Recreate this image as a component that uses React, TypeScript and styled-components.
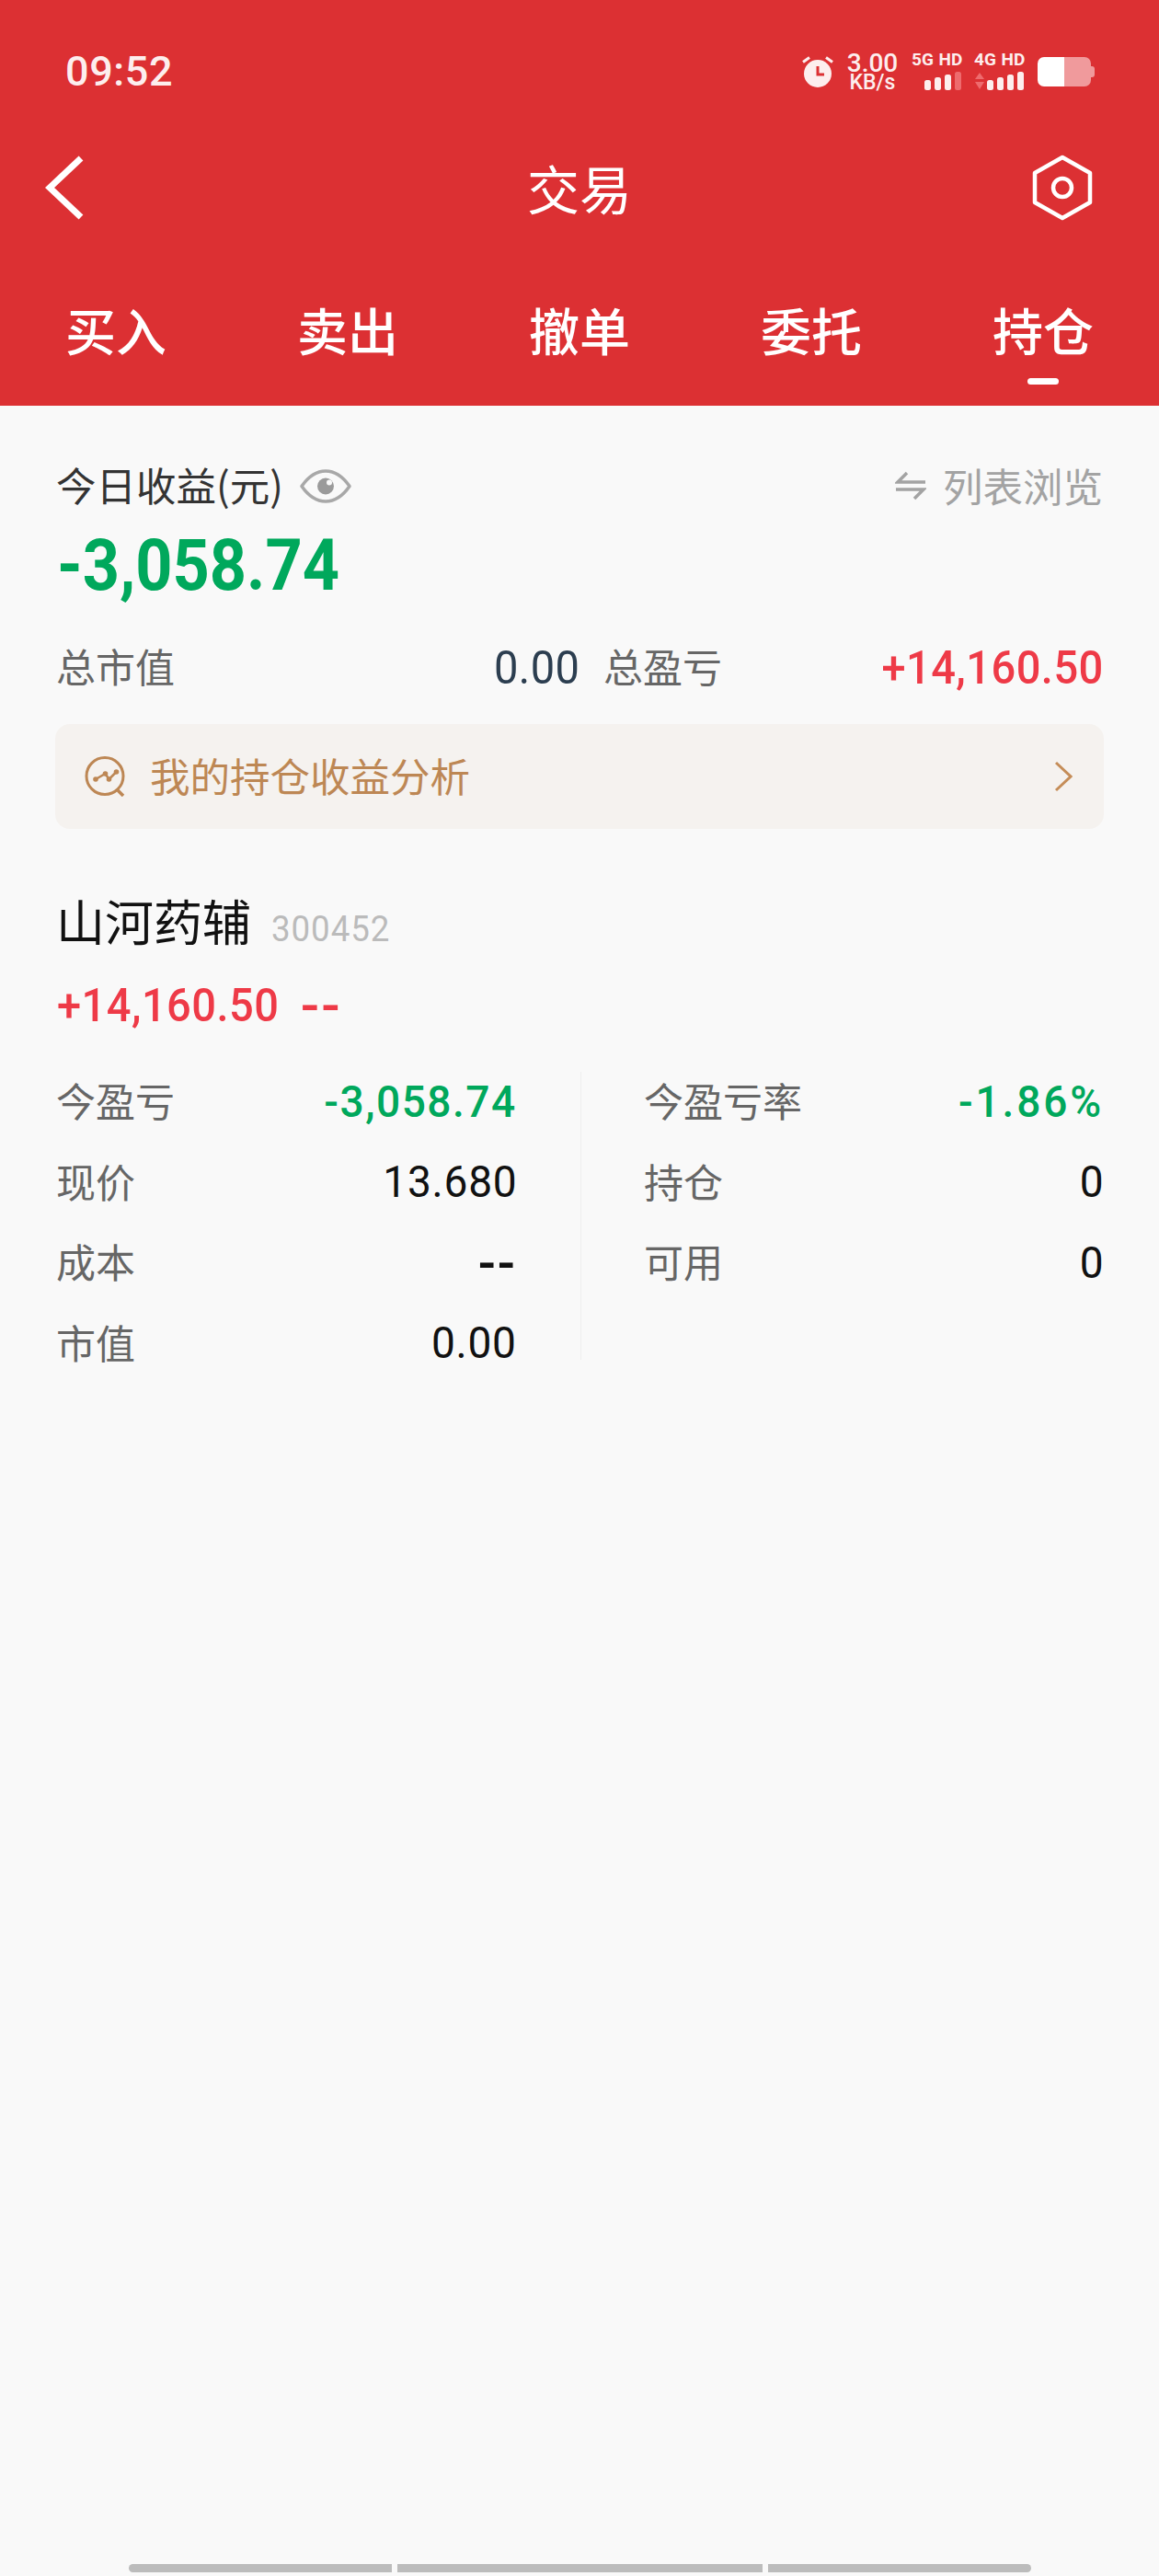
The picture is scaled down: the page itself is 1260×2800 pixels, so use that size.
import styled, { createGlobalStyle, css } from 'styled-components';

const GlobalStyle = createGlobalStyle`
    html, body {
        margin: 0;
        padding: 0;
        background: #f9f9f9;
    }
    * {
        box-sizing: border-box;
    }
`;

const CJK = `"Noto Sans CJK SC", sans-serif`;
const NUM = `Roboto, "Liberation Sans", sans-serif`;

const TABS = [
    { label: '买入' },
    { label: '卖出' },
    { label: '撤单' },
    { label: '委托' },
    { label: '持仓', active: true },
];

const LEFT_ROWS = [
    { label: '今盈亏', value: '-3,058.74', tone: 'green', spacing: '1.6px' },
    { label: '现价', value: '13.680' },
    { label: '成本', value: '--' },
    { label: '市值', value: '0.00' },
];

const RIGHT_ROWS = [
    { label: '今盈亏率', value: '-1.86%', tone: 'green', spacing: '3px' },
    { label: '持仓', value: '0' },
    { label: '可用', value: '0' },
];

const SIGNAL_BARS = [
    { x: 0, y: 9 },
    { x: 11, y: 6 },
    { x: 22, y: 3 },
    { x: 33, y: 0 },
];

const AlarmIcon = () => (
    <svg width="34" height="34" viewBox="0 0 34 34">
        <circle cx="17" cy="19" r="15" fill="#fdeeee" />
        <path d="M17 11v9h7" fill="none" stroke="#dc3033" strokeWidth="3" />
        <path d="M8 1.5 1 6.5M26 1.5l7 5" fill="none" stroke="#fdeeee" strokeWidth="3" />
    </svg>
);

const SignalIcon = ({ withArrows }: { withArrows?: boolean }) => (
    <svg width="56" height="20" viewBox="0 0 56 20">
        {withArrows && (
            <>
                <path d="M6 1 11 8H1Z" fill="#ee6b6e" />
                <path d="M6 19 11 11H1Z" fill="#ee6b6e" />
            </>
        )}
        {SIGNAL_BARS.map((bar, i) => (
            <rect
                key={bar.x}
                x={14 + bar.x}
                y={bar.y}
                width="7"
                height={20 - bar.y}
                rx="2.5"
                fill={!withArrows && i === 3 ? '#ee6b6e' : '#fdeeee'}
            />
        ))}
    </svg>
);

const BatteryIcon = () => (
    <svg width="62" height="32" viewBox="0 0 62 32">
        <path d="M29 0h22a7 7 0 0 1 7 7v18a7 7 0 0 1-7 7H29Z" fill="#f09a9c" />
        <path d="M7 0h22v32H7a7 7 0 0 1-7-7V7a7 7 0 0 1 7-7Z" fill="#fff" />
        <path d="M58 10h1a3 3 0 0 1 3 3v6a3 3 0 0 1-3 3h-1Z" fill="#f09a9c" />
    </svg>
);

const BackIcon = () => (
    <svg width="42" height="70" viewBox="0 0 42 70">
        <path d="M39 3 5 35l34 32" fill="none" stroke="#fff" strokeWidth="7" />
    </svg>
);

const HexIcon = () => (
    <svg width="66" height="72" viewBox="0 0 66 72">
        <path
            d="M33 3 63 20v32L33 69 3 52V20Z"
            fill="none"
            stroke="#fff"
            strokeWidth="4.5"
            strokeLinejoin="round"
        />
        <circle cx="33" cy="36" r="10" fill="none" stroke="#fff" strokeWidth="4.5" />
    </svg>
);

const EyeIcon = () => (
    <svg width="56" height="37" viewBox="0 0 56 37">
        <path
            d="M2 18.5C10 7 18 2 28 2s18 5 26 16.5C46 30 38 35 28 35S10 30 2 18.5Z"
            fill="none"
            stroke="#a8a8a8"
            strokeWidth="3.5"
            strokeLinejoin="round"
        />
        <circle cx="28" cy="18.5" r="9" fill="#9a9a9a" />
        <circle cx="32" cy="14.5" r="3" fill="#f9f9f9" />
    </svg>
);

const SwapIcon = () => (
    <svg width="34" height="32" viewBox="0 0 34 32">
        <path d="M33 12H3L13 2" fill="none" stroke="#a3a3a3" strokeWidth="3.5" />
        <path d="M1 20h30L21 30" fill="none" stroke="#a3a3a3" strokeWidth="3.5" />
    </svg>
);

const AnalysisIcon = () => (
    <svg width="46" height="44" viewBox="0 0 46 44">
        <circle cx="22" cy="21.5" r="20" fill="none" stroke="#bd8754" strokeWidth="3" />
        <path d="M35 36l7 7" fill="none" stroke="#bd8754" strokeWidth="3.5" />
        <path d="M12 25l10.500-6 4 6 8-8" fill="none" stroke="#bd8754" strokeWidth="2.500" />
        <circle cx="12" cy="25" r="2.800" fill="#bd8754" />
        <circle cx="22.500" cy="19" r="2.800" fill="#bd8754" />
        <circle cx="26.500" cy="25" r="2.800" fill="#bd8754" />
        <circle cx="34.500" cy="17" r="2.800" fill="#bd8754" />
    </svg>
);

const ChevronIcon = () => (
    <svg width="20" height="34" viewBox="0 0 20 34">
        <path d="M2 2l16 15L2 32" fill="none" stroke="#c58d58" strokeWidth="3" />
    </svg>
);

const App = () => {
    return (
        <SPage>
            <GlobalStyle />
            <Header>
                <StatusBar>
                    <Time>09:52</Time>
                    <StatusIcons>
                        <AlarmIcon />
                        <Speed>
                            <SpeedValue>3.00</SpeedValue>
                            <SpeedUnit>KB/s</SpeedUnit>
                        </Speed>
                        <Network>
                            <NetworkLabel>5G HD</NetworkLabel>
                            <SignalIcon />
                        </Network>
                        <Network>
                            <NetworkLabel>4G HD</NetworkLabel>
                            <SignalIcon withArrows />
                        </Network>
                        <BatteryIcon />
                    </StatusIcons>
                </StatusBar>
                <NavBar>
                    <NavBack>
                        <BackIcon />
                    </NavBack>
                    <NavTitle>交易</NavTitle>
                    <NavAction>
                        <HexIcon />
                    </NavAction>
                </NavBar>
                <Tabs>
                    {TABS.map((tab) => (
                        <Tab key={tab.label}>
                            <TabLabel>{tab.label}</TabLabel>
                            {tab.active && <TabIndicator />}
                        </Tab>
                    ))}
                </Tabs>
            </Header>

            <Content>
                <SummaryTop>
                    <TitleGroup>
                        <SummaryTitle>今日收益(元)</SummaryTitle>
                        <EyeIcon />
                    </TitleGroup>
                    <ListToggle>
                        <SwapIcon />
                        <span>列表浏览</span>
                    </ListToggle>
                </SummaryTop>
                <TodayProfit>-3,058.74</TodayProfit>
                <SummaryRow>
                    <SummaryCell>
                        <SummaryLabel>总市值</SummaryLabel>
                        <SummaryValue>0.00</SummaryValue>
                    </SummaryCell>
                    <SummaryCell>
                        <SummaryLabel>总盈亏</SummaryLabel>
                        <SummaryValue $tone="red">+14,160.50</SummaryValue>
                    </SummaryCell>
                </SummaryRow>
                <Banner>
                    <AnalysisIcon />
                    <BannerText>我的持仓收益分析</BannerText>
                    <ChevronIcon />
                </Banner>

                <StockHead>
                    <StockName>山河药辅</StockName>
                    <StockCode>300452</StockCode>
                </StockHead>
                <StockProfit>
                    <ProfitAmount>+14,160.50</ProfitAmount>
                    <ProfitDash>--</ProfitDash>
                </StockProfit>
                <StockGrid>
                    <StockColumn>
                        {LEFT_ROWS.map((row) => (
                            <StockRow key={row.label}>
                                <RowLabel>{row.label}</RowLabel>
                                <RowValue
                                    $tone={row.tone}
                                    $spacing={row.spacing}
                                    $dash={row.value === '--'}
                                >
                                    {row.value}
                                </RowValue>
                            </StockRow>
                        ))}
                    </StockColumn>
                    <ColumnRule />
                    <StockColumn>
                        {RIGHT_ROWS.map((row) => (
                            <StockRow key={row.label}>
                                <RowLabel>{row.label}</RowLabel>
                                <RowValue $tone={row.tone} $spacing={row.spacing}>
                                    {row.value}
                                </RowValue>
                            </StockRow>
                        ))}
                    </StockColumn>
                </StockGrid>
            </Content>

            <GestureBar>
                <GestureLeft />
                <GestureMiddle />
                <GestureRight />
            </GestureBar>
        </SPage>
    );
};
export default App;

// styling
// the app's digits are a narrow DIN cut, Roboto squeezed a little is the closest installed
const narrowDigits = css`
    display: inline-block;
    font-family: ${NUM};
    transform: scaleX(0.94);
    transform-origin: right center;
`;

const toneColor = (tone?: string, fallback = '#111') =>
    tone === 'red' ? '#ee3a47' : tone === 'green' ? '#00a85c' : fallback;

const SPage = styled.div`
    width: 1260px;
    height: 2800px;
    background: #f9f9f9;
    display: flex;
    flex-direction: column;
    overflow: hidden;
`;

const Header = styled.header`
    height: 441px;
    flex: none;
    background: #dc3033;
    color: #fff;
`;

const StatusBar = styled.div`
    height: 156px;
    padding: 0 70px 0 71px;
    display: flex;
    align-items: center;
    justify-content: space-between;
`;

const Time = styled.div`
    font: 500 45px/50px ${NUM};
    letter-spacing: 0.6px;
    color: #fdeeee;
`;

const StatusIcons = styled.div`
    display: flex;
    align-items: center;
    height: 40px;

    > svg:first-child {
        margin-right: 15px;
    }
    > svg:last-child {
        margin-left: 13px;
    }
`;

const Speed = styled.div`
    width: 55px;
    margin-right: 15px;
    display: flex;
    flex-direction: column;
    align-items: center;
    color: #fdeeee;
`;

const SpeedValue = styled.div`
    font: 500 28px/23px ${NUM};
`;

const SpeedUnit = styled.div`
    font: 500 23px/20px ${NUM};
`;

const Network = styled.div`
    width: 56px;
    height: 40px;
    display: flex;
    flex-direction: column;
    justify-content: space-between;
    color: #fdeeee;

    & + & {
        margin-left: 12px;
    }
`;

const NetworkLabel = styled.div`
    font: 700 19px/16px ${NUM};
    white-space: nowrap;
    word-spacing: 1px;
    margin-top: -1px;
`;

const NavBar = styled.nav`
    height: 96px;
    padding: 0 72px;
    display: grid;
    grid-template-columns: 1fr auto 1fr;
    align-items: center;
`;

const NavBack = styled.div`
    margin-left: -23px;
    display: flex;
`;

const NavTitle = styled.h1`
    margin: 0 0 2px;
    font: 400 57px/70px ${CJK};
    color: #fff;
`;

const NavAction = styled.div`
    justify-self: end;
    display: flex;
`;

const Tabs = styled.div`
    display: grid;
    grid-template-columns: repeat(5, 1fr);
    padding-top: 65px;
`;

const Tab = styled.div`
    display: flex;
    flex-direction: column;
    align-items: center;
    gap: 14px;
`;

const TabLabel = styled.span`
    font: 500 55px/80px ${CJK};
`;

const TabIndicator = styled.span`
    width: 34px;
    height: 7px;
    border-radius: 4px;
    background: #fff;
`;

const Content = styled.main`
    padding: 57px 62px 0;
`;

const SummaryTop = styled.div`
    height: 60px;
    display: flex;
    align-items: center;
    justify-content: space-between;
`;

const TitleGroup = styled.div`
    display: flex;
    align-items: center;
    gap: 18px;
`;

const SummaryTitle = styled.span`
    margin-left: -1px;
    padding-bottom: 2px;
    font: 400 43.5px/60px ${CJK};
    color: #333;
`;

const ListToggle = styled.div`
    display: flex;
    align-items: center;
    gap: 18px;
    margin-right: -1px;
    font: 400 43.5px/60px ${CJK};
    color: #a3a3a3;
`;

const TodayProfit = styled.div`
    margin-top: 15px;
    font: 700 78px/84px ${NUM};
    color: #00a85c;
    transform: scaleX(0.9);
    transform-origin: left center;
`;

const SummaryRow = styled.div`
    margin-top: 39px;
    display: grid;
    grid-template-columns: 568px 543px;
    column-gap: 27px;
`;

const SummaryCell = styled.div`
    display: flex;
    align-items: center;
    justify-content: space-between;
    height: 60px;
`;

const SummaryLabel = styled.span`
    margin-left: -1px;
    padding-bottom: 6px;
    font: 400 43px/60px ${CJK};
    color: #666;
`;

const SummaryValue = styled.span<{ $tone?: string }>`
    ${narrowDigits}
    font-size: 50px;
    font-weight: ${(p) => (p.$tone ? 500 : 400)};
    line-height: 60px;
    letter-spacing: 0.5px;
    color: ${(p) => toneColor(p.$tone, '#2c3e50')};
`;

const Banner = styled.div`
    margin-top: 31px;
    height: 114px;
    width: 1140px;
    margin-left: -2px;
    padding: 0 34px 0 32px;
    border-radius: 16px;
    background: #f5f2ef;
    display: flex;
    align-items: center;
`;

const BannerText = styled.span`
    margin-left: 25px;
    padding-bottom: 2px;
    flex: 1;
    font: 400 43.5px/60px ${CJK};
    color: #bd8754;
`;

const StockHead = styled.div`
    margin-top: 64px;
    margin-left: -1px;
    display: flex;
    align-items: baseline;
    gap: 22px;
`;

const StockName = styled.span`
    font: 400 53px/70px ${CJK};
    color: #111;
`;

const StockCode = styled.span`
    ${narrowDigits}
    transform-origin: left center;
    font-size: 39px;
    line-height: 50px;
    letter-spacing: 1px;
    color: #bbb;
`;

const StockProfit = styled.div`
    margin-top: 28px;
    display: flex;
    align-items: center;
    height: 60px;
    color: #ee3a47;
`;

const ProfitAmount = styled.span`
    ${narrowDigits}
    transform-origin: left center;
    font-size: 50px;
    font-weight: 500;
    line-height: 60px;
    letter-spacing: 0.5px;
`;

const ProfitDash = styled.span`
    margin-left: 8px;
    font: 500 60px/60px ${NUM};
    letter-spacing: 2px;
`;

const StockGrid = styled.div`
    margin-top: 31px;
    width: 1138px;
    display: grid;
    grid-template-columns: 500px 1px 499px;
    justify-content: space-between;
`;

const StockColumn = styled.div`
    display: flex;
    flex-direction: column;
`;

const ColumnRule = styled.div`
    margin: 11px 0 26px;
    background: #eee;
`;

const StockRow = styled.div`
    height: 87.5px;
    display: flex;
    align-items: center;
    justify-content: space-between;
`;

const RowLabel = styled.span`
    margin-left: -1px;
    padding-bottom: 5px;
    font: 400 43px/60px ${CJK};
    color: #666;
`;

const RowValue = styled.span<{ $tone?: string; $spacing?: string; $dash?: boolean }>`
    ${narrowDigits}
    font-size: 49px;
    font-weight: ${(p) => (p.$tone ? 500 : 400)};
    line-height: 60px;
    letter-spacing: ${(p) => p.$spacing ?? '0.8px'};
    color: ${(p) => toneColor(p.$tone)};
    ${(p) =>
        p.$dash &&
        css`
            font-size: 60px;
            font-weight: 500;
            letter-spacing: 2px;
        `}
`;

const GestureBar = styled.div`
    margin-top: auto;
    margin-bottom: 4px;
    align-self: center;
    display: flex;
    gap: 6px;
`;

const GestureSegment = styled.span`
    height: 9px;
    background: #bcbcbc;
`;

const GestureLeft = styled(GestureSegment)`
    width: 286px;
    border-radius: 5px 0 0 5px;
`;

const GestureMiddle = styled(GestureSegment)`
    width: 397px;
`;

const GestureRight = styled(GestureSegment)`
    width: 286px;
    border-radius: 0 5px 5px 0;
`;
